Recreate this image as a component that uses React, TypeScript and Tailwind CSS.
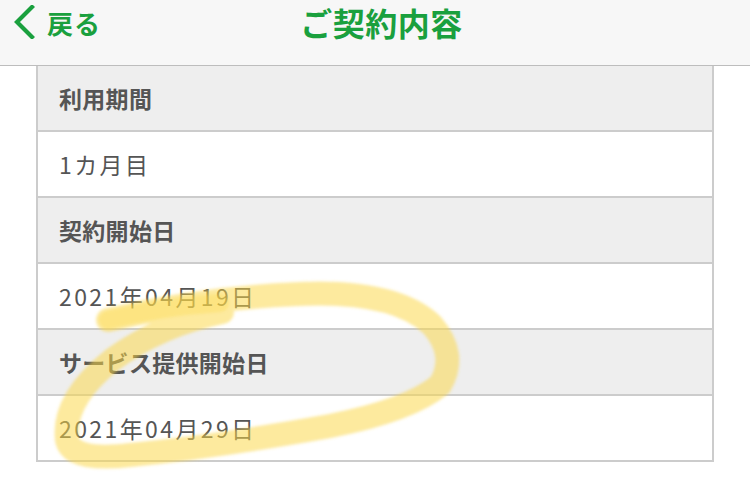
import React from 'react';

const rows = [
  { label: '利用期間', value: '1カ月目' },
  { label: '契約開始日', value: '2021年04月19日' },
  { label: 'サービス提供開始日', value: '2021年04月29日' },
];

const font = { fontFamily: '"Noto Sans CJK JP", "Noto Sans", sans-serif' };

const App: React.FC = () => {
  return (
    <div className="relative w-[750px] h-[493px] bg-white overflow-hidden" style={font}>
      {/* nav bar */}
      <div className="h-[66px] bg-[#f7f7f7] border-b border-[#bdbdbd] flex items-start">
        <div className="flex-1 flex items-start pl-[13px] pt-[4px]">
          <svg width="22" height="34" viewBox="0 0 22 34" className="mt-[1px]">
            <path d="M19 2 L4 17 L19 32" fill="none" stroke="#1aa03e" strokeWidth="4.2" strokeLinecap="square" />
          </svg>
          <span className="ml-[12px] text-[26px] font-bold leading-[38px] tracking-[1px] text-[#1aa03e]">戻る</span>
        </div>
        <div className="flex-none text-[32px] font-bold leading-[44px] text-[#1aa03e] tracking-[0.5px]">ご契約内容</div>
        <div className="flex-1" />
      </div>

      {/* detail table */}
      <div className="ml-[36px] w-[678px] border-x-2 border-[#cccccc]">
        {rows.map((r) => (
          <div key={r.label}>
            <div className="h-[66px] bg-[#eeeeee] border-b-2 border-[#cccccc] flex items-center pl-[21px]">
              <span className="text-[23px] font-bold text-[#555555] tracking-[0.3px]">{r.label}</span>
            </div>
            <div className="h-[66px] bg-white border-b-2 border-[#cccccc] flex items-center pl-[21px]">
              <span className="text-[23px] text-[#555555] tracking-[2.4px]">{r.value}</span>
            </div>
          </div>
        ))}
      </div>

      {/* highlighter scribble */}
      <svg className="absolute left-0 top-0 pointer-events-none" width="750" height="493" viewBox="0 0 750 493">
        <defs>
          <filter id="soft" x="-10%" y="-10%" width="120%" height="120%">
            <feGaussianBlur stdDeviation="1.6" />
          </filter>
        </defs>
        <g filter="url(#soft)" fill="none" strokeLinecap="round" strokeLinejoin="round" strokeWidth="24">
          <path
            d="M108 320 Q 200 298 300 294 Q 395 290 432 325 Q 458 355 440 385 Q 410 410 330 426 Q 220 446 130 455 Q 72 462 67 440 Q 62 400 112 360 Q 160 325 222 312"
            stroke="rgba(251,214,70,0.52)"
          />
          <path d="M108 320 Q 160 307 220 303" stroke="rgba(251,214,70,0.35)" strokeWidth="18" />
        </g>
      </svg>
    </div>
  );
};

export default App;
